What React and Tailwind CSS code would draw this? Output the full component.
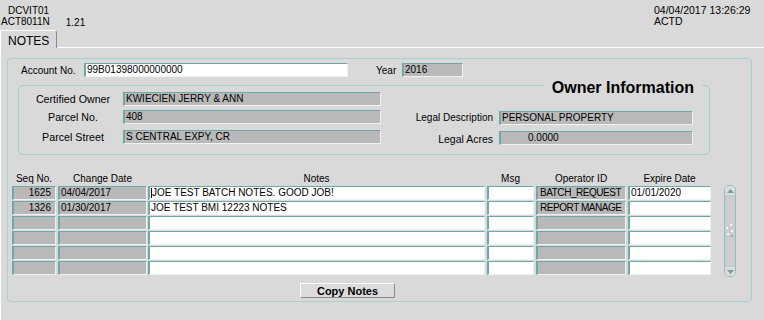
import React from "react";

const cellEdge =
  "h-[14px] shrink-0 border-t border-l-2 border-r border-b border-t-[#6fa8a8] border-l-[#6fa8a8] border-r-[#f2f2f2] border-b-[#f2f2f2] leading-[12px] whitespace-nowrap overflow-hidden";

const rows = [
  ["1625", "04/04/2017", "JOE TEST BATCH NOTES. GOOD JOB!", "", "BATCH_REQUEST", "01/01/2020"],
  ["1326", "01/30/2017", "JOE TEST BMI 12223 NOTES", "", "REPORT MANAGE", ""],
  ["", "", "", "", "", ""],
  ["", "", "", "", "", ""],
  ["", "", "", "", "", ""],
  ["", "", "", "", "", ""],
];

function Field({ children, className = "" }) {
  return <div className={`${cellEdge} ${className}`}>{children}</div>;
}

function NoteRow({ r, first }) {
  return (
    <div className="flex">
      <Field className="w-[44px] bg-[#b9b9b9] text-right pr-[4px]">{r[0]}</Field>
      <Field className="w-[89px] ml-[2px] bg-[#b9b9b9] pl-[1px]">{r[1]}</Field>
      <Field className="w-[337px] ml-[1px] bg-white pl-[1px]">
        {first && <span className="inline-block w-px h-[10px] bg-black align-[-2px]" />}
        {r[2]}
      </Field>
      <Field className="w-[47px] ml-[2px] bg-white">{r[3]}</Field>
      <Field className="w-[90px] ml-[2px] bg-[#b9b9b9] pl-[2px] tracking-[-0.45px]">{r[4]}</Field>
      <Field className="w-[83px] ml-[2px] bg-white pl-[1px]">{r[5]}</Field>
    </div>
  );
}

function ScrollBar() {
  return (
    <div className="ml-[13px] -mt-px w-[12px] h-[92px] border border-[#8fc0c0] rounded-[5px] bg-[#cdcdcd] flex flex-col items-center justify-between overflow-hidden">
      <div className="w-full h-[10px] bg-[#dcdcdc] border-b border-[#b0cfcf] flex items-center justify-center">
        <svg width="7" height="4" viewBox="0 0 7 4">
          <path d="M0 4 L3.5 0 L7 4 Z" fill="#7f9a9a" />
        </svg>
      </div>
      <svg width="8" height="14" viewBox="0 0 8 14">
        <rect x="4" y="0" width="2" height="2" fill="#f4f4f4" />
        <rect x="0" y="3" width="2" height="2" fill="#f4f4f4" />
        <rect x="5" y="6" width="2" height="2" fill="#f4f4f4" />
        <rect x="1" y="9" width="2" height="2" fill="#f4f4f4" />
        <rect x="5" y="11" width="2" height="2" fill="#9ab" />
      </svg>
      <div className="w-full h-[10px] bg-[#dcdcdc] border-t border-[#b0cfcf] flex items-center justify-center">
        <svg width="7" height="4" viewBox="0 0 7 4">
          <path d="M0 0 L3.5 4 L7 0 Z" fill="#7f9a9a" />
        </svg>
      </div>
    </div>
  );
}

export default function App() {
  return (
    <div className="w-[764px] h-[320px] bg-[#d9d9d9] overflow-hidden font-['Liberation_Sans',Arial,sans-serif] text-[10px] leading-[11px] text-black">
      {/* HEADER */}
      <div className="flex justify-between h-[30px]">
        <div className="pt-[5px]">
          <div className="pl-[8px]">DCVIT01</div>
          <div className="flex pl-[1px]">
            <span>ACT8011N</span>
            <span className="ml-[16px] mt-[1px]">1.21</span>
          </div>
        </div>
        <div className="pt-[5px] w-[110px] text-[10.5px]">
          <div>04/04/2017 13:26:29</div>
          <div>ACTD</div>
        </div>
      </div>

      {/* TAB STRIP */}
      <div className="flex h-[18px]">
        <div className="w-[57px] h-[18px] border-t border-l border-white border-r border-r-[#8a8a8a] rounded-tr-[3px] pl-[7px] pt-[3px] text-[12px] leading-[14px]">
          NOTES
        </div>
        <div className="flex-1 border-b border-white" />
      </div>

      {/* PANEL */}
      <div className="h-[272px] border-l border-white pl-[6px] pt-[10px]">
        <div className="w-[745px] h-[244px] border border-[#a6cfcf] rounded-[4px]">
          {/* account row */}
          <div className="flex items-center h-[14px] mt-[4px] ml-[13px]">
            <span className="w-[63px]">Account No.</span>
            <Field className="w-[264px] bg-white pl-[1px]">99B01398000000000</Field>
            <span className="ml-[28px] w-[26px]">Year</span>
            <Field className="w-[61px] bg-[#b9b9b9] pl-[1px]">2016</Field>
          </div>

          {/* owner information group */}
          <div className="relative ml-[10px] mt-[8px] w-[692px] h-[70px] border border-[#a6cfcf] rounded-[5px]">
            <span className="absolute right-[7px] -top-[6px] px-[8px] bg-[#d9d9d9] text-[16px] leading-[16px] font-bold">
              Owner Information
            </span>
            <div className="flex flex-col pt-[6px]">
              <div className="flex items-center h-[14px]">
                <span className="w-[104px] pl-[4px] text-center text-[10.7px]">Certified Owner</span>
                <Field className="w-[258px] bg-[#b9b9b9] pl-[1px]">KWIECIEN JERRY &amp; ANN</Field>
              </div>
              <div className="flex items-start mt-[4px]">
                <span className="w-[104px] pl-[4px] text-center leading-[14px] text-[10.7px]">Parcel No.</span>
                <Field className="w-[258px] bg-[#b9b9b9] pl-[1px]">408</Field>
                <span className="w-[112px] text-right mt-[1px] leading-[14px]">Legal Description</span>
                <Field className="w-[194px] ml-[6px] mt-[1px] bg-[#b9b9b9] pl-[1px]">PERSONAL PROPERTY</Field>
              </div>
              <div className="flex items-start mt-[5px]">
                <span className="w-[104px] pl-[4px] text-center leading-[14px] text-[10.7px]">Parcel Street</span>
                <Field className="w-[258px] bg-[#b9b9b9] pl-[1px]">S CENTRAL EXPY, CR</Field>
                <span className="w-[112px] text-right mt-[2px] leading-[14px] text-[10.5px]">Legal Acres</span>
                <Field className="w-[194px] ml-[6px] mt-[1px] bg-[#b9b9b9] pl-[27px]">0.0000</Field>
              </div>
            </div>
          </div>

          {/* notes table */}
          <div className="ml-[4px] mt-[19px]">
            <div className="flex h-[12px] leading-[10px] text-black">
              <span className="w-[44px] text-center">Seq No.</span>
              <span className="w-[89px] ml-[2px] text-center">Change Date</span>
              <span className="w-[337px] ml-[1px] text-center">Notes</span>
              <span className="w-[47px] ml-[2px] text-center">Msg</span>
              <span className="w-[90px] ml-[2px] text-center">Operator ID</span>
              <span className="w-[83px] ml-[2px] text-center">Expire Date</span>
            </div>
            <div className="flex items-start">
              <div className="flex flex-col gap-[1px]">
                {rows.map((r, i) => (
                  <NoteRow key={i} r={r} first={i === 0} />
                ))}
              </div>
              <ScrollBar />
            </div>
          </div>

          {/* button */}
          <button className="block ml-[292px] mt-[6px] w-[95px] h-[15px] bg-[#dcdcdc] border border-t-white border-l-white border-r-[#8a8a8a] border-b-[#8a8a8a] text-[11px] leading-[12px] font-bold">
            Copy Notes
          </button>
        </div>
      </div>
    </div>
  );
}
